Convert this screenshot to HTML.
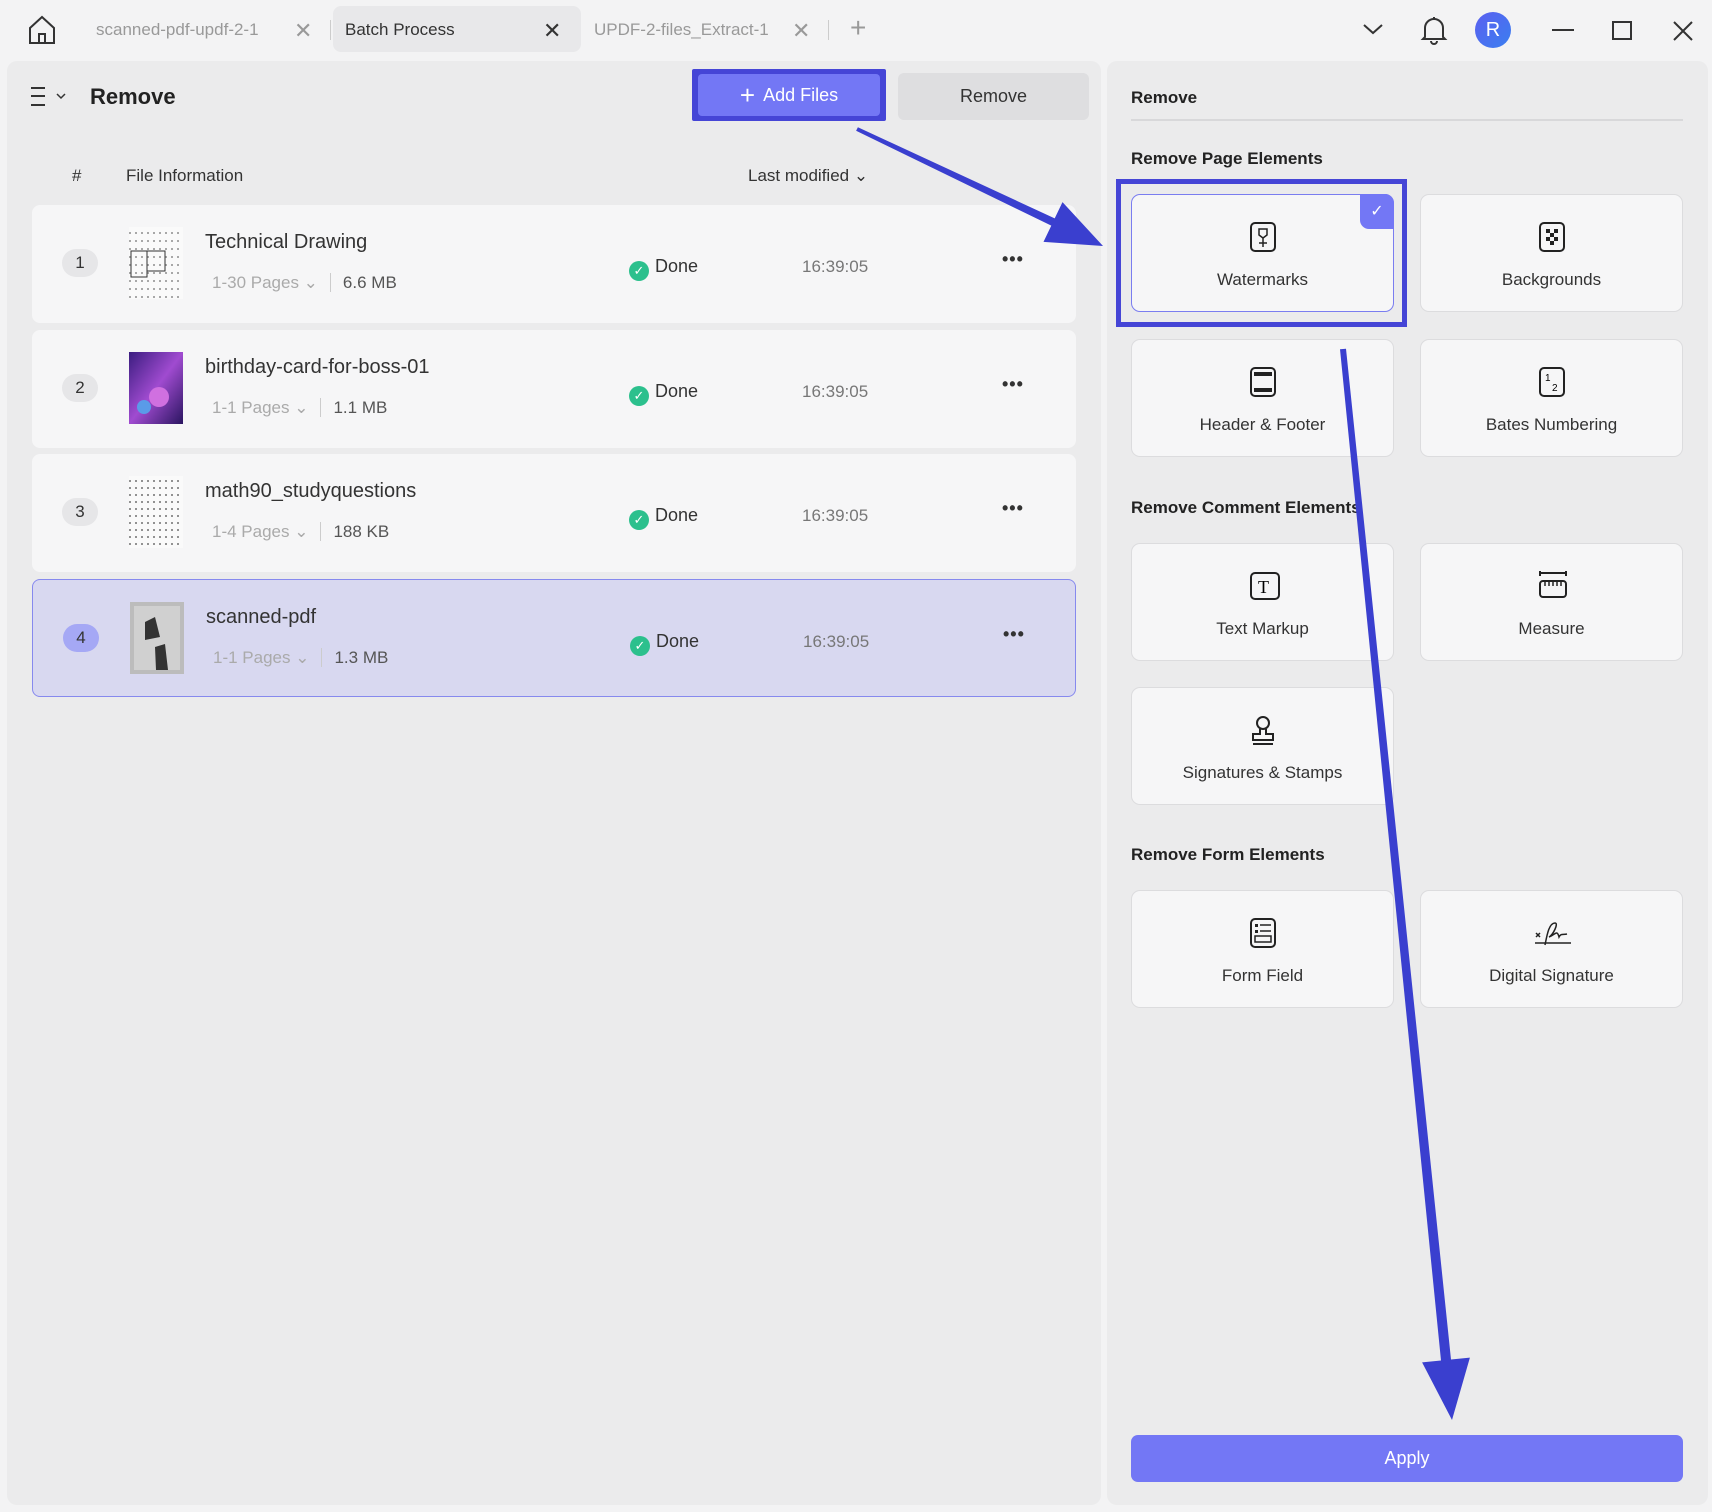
<!DOCTYPE html>
<html><head><meta charset="utf-8"><style>
*{box-sizing:border-box;margin:0;padding:0}
body{width:1712px;height:1512px;background:#f3f3f4;font-family:"Liberation Sans","DejaVu Sans",sans-serif;color:#222;position:relative;overflow:hidden}
.a{position:absolute}
.panel{background:#ebebec;border-radius:10px}
.tab{font-size:17px;color:#999;top:20px}
.row{position:absolute;left:32px;width:1044px;height:118px;background:#f6f6f7;border-radius:8px}
.num{position:absolute;left:30px;top:44px;width:36px;height:28px;border-radius:14px;background:#e6e6e8;text-align:center;line-height:28px;font-size:17px;color:#333}
.thumb{position:absolute;left:97px;top:22px;width:54px;height:72px}
.title{position:absolute;left:173px;top:26px;font-size:20px;color:#333}
.sub{position:absolute;left:180px;top:68px;font-size:17px;color:#aaa}
.sub b{font-weight:normal;color:#555;margin-left:12px;border-left:1px solid #ccc;padding-left:12px}
.done{position:absolute;left:597px;top:51px;font-size:18px;color:#333}
.done i{display:inline-block;width:20px;height:20px;border-radius:50%;background:#2cc08d;vertical-align:-3px;margin-right:6px;color:#fff;font-style:normal;font-size:13px;text-align:center;line-height:20px}
.time{position:absolute;left:770px;top:52px;font-size:17px;color:#777}
.dots{position:absolute;left:970px;top:44px;font-size:18px;font-weight:bold;color:#333;letter-spacing:1px}
.card{position:absolute;width:263px;height:118px;background:#f6f6f7;border:1px solid #dcdcde;border-radius:9px;text-align:center}
.card svg{position:absolute;left:117px;top:26px}
.card span{position:absolute;left:0;right:0;top:75px;font-size:17px;color:#333}
.h{position:absolute;left:1131px;font-size:17px;font-weight:bold;color:#222}
</style></head><body>
<svg class="a" style="left:27px;top:14px" width="30" height="32" viewBox="0 0 30 32"><path d="M3 14 L15 3 L27 14 V29 H3 Z M12 29 V20 H18 V29" fill="none" stroke="#333" stroke-width="2"/></svg>
<div class="a tab" style="left:96px">scanned-pdf-updf-2-1</div>
<div class="a" style="left:294px;top:18px;font-size:22px;color:#999">✕</div>
<div class="a" style="left:330px;top:20px;width:1px;height:20px;background:#ccc"></div>
<div class="a" style="left:333px;top:6px;width:248px;height:46px;background:#e8e8ea;border-radius:8px"></div>
<div class="a tab" style="left:345px;color:#333">Batch Process</div>
<div class="a" style="left:543px;top:18px;font-size:22px;color:#333">✕</div>
<div class="a tab" style="left:594px">UPDF-2-files_Extract-1</div>
<div class="a" style="left:792px;top:18px;font-size:22px;color:#999">✕</div>
<div class="a" style="left:828px;top:20px;width:1px;height:20px;background:#ccc"></div>
<div class="a" style="left:850px;top:12px;font-size:28px;color:#999;font-weight:300">+</div>
<svg class="a" style="left:1362px;top:22px" width="22" height="14"><path d="M2 3 L11 11 L20 3" fill="none" stroke="#333" stroke-width="2"/></svg>
<svg class="a" style="left:1420px;top:14px" width="28" height="32"><path d="M5 23 V14 A9 9 0 0 1 23 14 V23 L25 25 H3 Z M11 27 A3 3 0 0 0 17 27" fill="none" stroke="#333" stroke-width="2"/><path d="M14 3 V5" stroke="#333" stroke-width="2"/></svg>
<div class="a" style="left:1475px;top:12px;width:36px;height:36px;border-radius:50%;background:linear-gradient(135deg,#5b5ff0,#3a7ff0);color:#fff;text-align:center;line-height:36px;font-size:20px">R</div>
<div class="a" style="left:1552px;top:29px;width:22px;height:2px;background:#333"></div>
<div class="a" style="left:1612px;top:21px;width:20px;height:19px;border:2px solid #333"></div>
<svg class="a" style="left:1672px;top:20px" width="22" height="22"><path d="M2 2 L20 20 M20 2 L2 20" stroke="#333" stroke-width="2"/></svg>

<div class="a panel" style="left:7px;top:61px;width:1094px;height:1444px"></div>
<svg class="a" style="left:30px;top:86px" width="40" height="22"><path d="M1 2H15M1 10H15M1 19H15" stroke="#333" stroke-width="2"/><path d="M27 8 L31 12 L35 8" fill="none" stroke="#333" stroke-width="1.5"/></svg>
<div class="a" style="left:90px;top:84px;font-size:22px;font-weight:bold;color:#222">Remove</div>
<div class="a" style="left:692px;top:69px;width:194px;height:52px;background:#4545d6;border-radius:2px"></div>
<div class="a" style="left:698px;top:74px;width:182px;height:42px;background:#7377f5;border-radius:4px;color:#fff;font-size:18px;text-align:center;line-height:42px"><span style="font-size:26px;vertical-align:-3px;margin-right:8px;font-weight:300">+</span>Add Files</div>
<div class="a" style="left:898px;top:73px;width:191px;height:47px;background:#dedee0;border-radius:6px;text-align:center;line-height:47px;font-size:18px;color:#333">Remove</div>
<div class="a" style="left:72px;top:166px;font-size:17px;color:#333">#</div>
<div class="a" style="left:126px;top:166px;font-size:17px;color:#333">File Information</div>
<div class="a" style="left:748px;top:166px;font-size:17px;color:#333">Last modified ⌄</div>

<div class="row" style="top:205px"><div class="num">1</div>
<svg class="thumb" viewBox="0 0 54 72"><rect width="54" height="72" fill="#fafafa"/><g stroke="#555" stroke-width="1" stroke-dasharray="2 4"><path d="M0 6H54M0 14H54M0 22H54M0 30H54M0 38H54M0 46H54M0 54H54M0 62H54M0 70H54"/></g><rect x="2" y="24" width="16" height="26" fill="none" stroke="#333"/><rect x="18" y="24" width="18" height="20" fill="none" stroke="#333"/></svg>
<div class="title">Technical Drawing</div><div class="sub">1-30 Pages ⌄<b>6.6 MB</b></div>
<div class="done"><i>✓</i>Done</div><div class="time">16:39:05</div><div class="dots">•••</div></div>

<div class="row" style="top:330px"><div class="num">2</div>
<svg class="thumb" viewBox="0 0 54 72"><defs><linearGradient id="g" x1="0" y1="0" x2="1" y2="1"><stop offset="0" stop-color="#3b1d80"/><stop offset=".5" stop-color="#a04bd0"/><stop offset="1" stop-color="#2a1560"/></linearGradient></defs><rect width="54" height="72" fill="url(#g)"/><circle cx="30" cy="45" r="10" fill="#d070e0"/><circle cx="15" cy="55" r="7" fill="#5a9be8"/></svg>
<div class="title">birthday-card-for-boss-01</div><div class="sub">1-1 Pages ⌄<b>1.1 MB</b></div>
<div class="done"><i>✓</i>Done</div><div class="time">16:39:05</div><div class="dots">•••</div></div>

<div class="row" style="top:454px"><div class="num">3</div>
<svg class="thumb" viewBox="0 0 54 72"><rect width="54" height="72" fill="#fafafa"/><g stroke="#555" stroke-width="1.2" stroke-dasharray="2 4"><path d="M0 5H54M0 12H54M0 19H54M0 26H54M0 33H54M0 40H54M0 47H54M0 54H54M0 61H54M0 68H54"/></g></svg>
<div class="title">math90_studyquestions</div><div class="sub">1-4 Pages ⌄<b>188 KB</b></div>
<div class="done"><i>✓</i>Done</div><div class="time">16:39:05</div><div class="dots">•••</div></div>

<div class="row" style="top:579px;background:#d8d8f0;border:1.5px solid #8689ee"><div class="num" style="background:#a5a8f5">4</div>
<svg class="thumb" viewBox="0 0 54 72"><rect width="54" height="72" fill="#bcbcbc"/><rect x="4" y="4" width="46" height="64" fill="#d0d0d0"/><path d="M15 20 L25 15 L30 35 L15 38Z M25 45 L35 42 L38 68 L26 68Z" fill="#333"/></svg>
<div class="title">scanned-pdf</div><div class="sub">1-1 Pages ⌄<b>1.3 MB</b></div>
<div class="done"><i>✓</i>Done</div><div class="time">16:39:05</div><div class="dots">•••</div></div>

<div class="a panel" style="left:1107px;top:61px;width:601px;height:1444px"></div>
<div class="h" style="top:88px">Remove</div>
<div class="a" style="left:1131px;top:119px;width:552px;height:2px;background:#d8d8da"></div>
<div class="h" style="top:149px">Remove Page Elements</div>
<div class="a" style="left:1116px;top:179px;width:291px;height:148px;border:5px solid #4545d6"></div>
<div class="card" style="left:1131px;top:194px;border:1.5px solid #7a7df0"><svg width="28" height="32"><rect x="2" y="2" width="24" height="28" rx="4" fill="none" stroke="#222" stroke-width="2"/><path d="M10 8H18V14L14 17L10 14Z M14 17V26M10 22H18" fill="none" stroke="#222" stroke-width="1.5"/></svg><span>Watermarks</span>
<div style="position:absolute;right:-1px;top:-1px;width:34px;height:35px;background:#7377f5;border-radius:0 9px 0 9px;color:#fff;font-size:16px;line-height:35px">✓</div></div>
<div class="card" style="left:1420px;top:194px"><svg width="28" height="32"><rect x="2" y="2" width="24" height="28" rx="4" fill="none" stroke="#222" stroke-width="2"/><path d="M8 8h4v4h-4zM16 8h4v4h-4zM12 12h4v4h-4zM8 16h4v4h-4zM16 16h4v4h-4zM12 20h4v4h-4z" fill="#222"/></svg><span>Backgrounds</span></div>
<div class="card" style="left:1131px;top:339px"><svg width="28" height="32"><rect x="2" y="2" width="24" height="28" rx="4" fill="none" stroke="#222" stroke-width="2"/><rect x="5" y="6" width="18" height="4" fill="#222"/><rect x="5" y="22" width="18" height="4" fill="#222"/></svg><span>Header &amp; Footer</span></div>
<div class="card" style="left:1420px;top:339px"><svg width="28" height="32"><rect x="2" y="2" width="24" height="28" rx="4" fill="none" stroke="#222" stroke-width="2"/><text x="7" y="15" font-size="10" font-family="Liberation Sans">1</text><text x="14" y="25" font-size="10" font-family="Liberation Sans">2</text></svg><span>Bates Numbering</span></div>
<div class="h" style="top:498px">Remove Comment Elements</div>
<div class="card" style="left:1131px;top:543px"><svg width="32" height="32"><rect x="2" y="3" width="28" height="26" rx="4" fill="none" stroke="#222" stroke-width="2"/><text x="9" y="23" font-size="18" font-family="Liberation Serif">T</text></svg><span>Text Markup</span></div>
<div class="card" style="left:1420px;top:543px"><svg width="30" height="32"><path d="M2 3H28M2 1V6M28 1V6" stroke="#222" stroke-width="2"/><rect x="2" y="11" width="26" height="16" rx="3" fill="none" stroke="#222" stroke-width="2"/><path d="M7 12V16M11 12V16M15 12V16M19 12V16M23 12V16" stroke="#222" stroke-width="1.5"/></svg><span>Measure</span></div>
<div class="card" style="left:1131px;top:687px"><svg width="28" height="32"><circle cx="14" cy="9" r="6" fill="none" stroke="#222" stroke-width="2"/><path d="M11 15V20H4V26H24V20H17V15M4 30H24" fill="none" stroke="#222" stroke-width="2"/></svg><span>Signatures &amp; Stamps</span></div>
<div class="h" style="top:845px">Remove Form Elements</div>
<div class="card" style="left:1131px;top:890px"><svg width="28" height="32"><rect x="2" y="2" width="24" height="28" rx="4" fill="none" stroke="#222" stroke-width="2"/><rect x="6" y="7" width="3" height="3" fill="#222"/><rect x="6" y="13" width="3" height="3" fill="#222"/><path d="M11 8H22M11 14H22" stroke="#222" stroke-width="1.5"/><rect x="6" y="19" width="16" height="6" fill="none" stroke="#222" stroke-width="1.5"/></svg><span>Form Field</span></div>
<div class="card" style="left:1420px;top:890px"><svg width="40" height="32" style="left:112px"><path d="M3 16L7 20M7 16L3 20M2 26H38" stroke="#222" stroke-width="1.5"/><path d="M12 28 C14 18 16 6 22 6 C26 6 20 18 16 20 C22 18 24 12 26 20 C28 16 30 18 34 17" fill="none" stroke="#222" stroke-width="1.5"/></svg><span>Digital Signature</span></div>
<div class="a" style="left:1131px;top:1435px;width:552px;height:47px;background:#7377f5;border-radius:7px;color:#fff;font-size:18px;text-align:center;line-height:47px">Apply</div>

<svg class="a" style="left:0;top:0" width="1712" height="1512">
<polygon points="857.9,127.2 1054.7,218.4 1062.5,202.1 1103,246 1043.5,241.9 1051.3,225.6 856.1,130.8" fill="#3a3fcf"/>
<polygon points="1346,348.7 1451,1359.5 1469.9,1357.6 1452,1420 1422.1,1362.4 1441,1360.5 1340,349.3" fill="#3a3fcf"/>
</svg>
</body></html>
